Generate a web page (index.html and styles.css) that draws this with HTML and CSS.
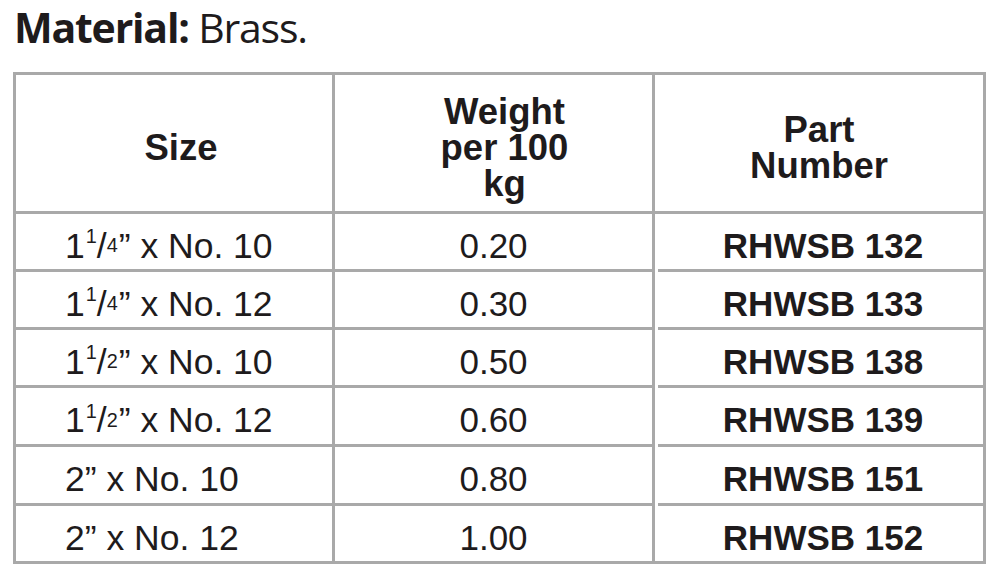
FILE: index.html
```html
<!DOCTYPE html>
<html lang="en">
<head>
<meta charset="utf-8">
<title>Material: Brass</title>
<link rel="stylesheet" href="styles.css">
</head>
<body>
<div class="page">
  <h1 class="title"><b>Material:</b> Brass.</h1>
  <div class="grid">
    <div class="cell head head-size">Size</div>
    <div class="cell head head-weight">Weight<br>per 100<br>kg</div>
    <div class="cell head">Part<br>Number</div>

    <div class="cell size">1<span class="sup">1</span>/<span class="sub">4</span>” x No. 10</div>
    <div class="cell">0.20</div>
    <div class="cell part">RHWSB 132</div>

    <div class="cell size">1<span class="sup">1</span>/<span class="sub">4</span>” x No. 12</div>
    <div class="cell">0.30</div>
    <div class="cell part">RHWSB 133</div>

    <div class="cell size">1<span class="sup">1</span>/<span class="sub">2</span>” x No. 10</div>
    <div class="cell">0.50</div>
    <div class="cell part">RHWSB 138</div>

    <div class="cell size">1<span class="sup">1</span>/<span class="sub">2</span>” x No. 12</div>
    <div class="cell">0.60</div>
    <div class="cell part">RHWSB 139</div>

    <div class="cell size">2” x No. 10</div>
    <div class="cell">0.80</div>
    <div class="cell part">RHWSB 151</div>

    <div class="cell size">2” x No. 12</div>
    <div class="cell">1.00</div>
    <div class="cell part last">RHWSB 152</div>
  </div>
</div>
</body>
</html>
```
FILE: styles.css
```css
html, body {
  margin: 0;
  padding: 0;
  background: #ffffff;
}

.page {
  padding: 2px 8px 0 13px;
  color: #1e1b1c;
}

.title {
  margin: 0 0 20px 1px;
  height: 50px;
  font-family: "Open Sans", "Noto Sans", sans-serif;
  font-size: 41px;
  font-weight: 400;
  line-height: 50px;
  letter-spacing: -1.2px;
  white-space: nowrap;
}

.title b {
  font-weight: 700;
}

.grid {
  display: grid;
  width: 967px;
  grid-template-columns: 316px 317px 328px;
  grid-template-rows: 136px 55px 55px 55px 56px 56px 55px;
  gap: 3px;
  padding: 3px;
  background: #a9a9a9;
  font-family: "Liberation Sans", Arial, sans-serif;
}

.cell {
  position: relative;
  display: flex;
  align-items: center;
  justify-content: center;
  background: #ffffff;
  padding-top: 8px;
  box-sizing: border-box;
  font-size: 35px;
  line-height: 40px;
  white-space: nowrap;
}

.head {
  font-weight: 700;
  font-size: 36.5px;
  line-height: 36px;
  text-align: center;
  padding-top: 10px;
}

.head-size {
  padding-left: 14px;
}

.head-weight {
  padding-left: 22px;
}

.size {
  justify-content: flex-start;
  padding-left: 49px;
  font-size: 35.5px;
}

.part {
  font-weight: 700;
  font-size: 35px;
  padding-left: 8px;
}

.part::after {
  content: "";
  position: absolute;
  left: 0;
  bottom: -3px;
  width: 3px;
  height: 3px;
  background: #ffffff;
}

.part.last::after {
  display: none;
}

.sup,
.sub {
  font-size: 0.56em;
  line-height: 1;
  position: relative;
}

.sup {
  top: -0.42em;
  margin-left: 1px;
}

.sub {
  top: 0.04em;
  margin-right: 1px;
}
```
